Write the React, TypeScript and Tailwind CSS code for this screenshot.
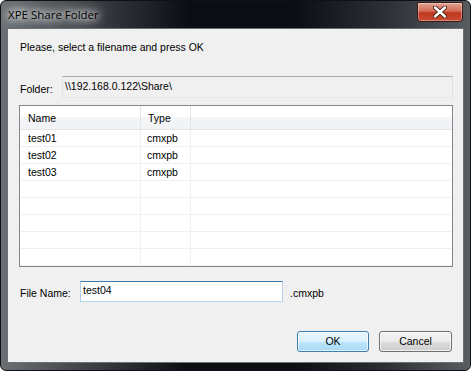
import React from "react";

const rows = [
  { name: "test01", type: "cmxpb" },
  { name: "test02", type: "cmxpb" },
  { name: "test03", type: "cmxpb" },
  { name: "", type: "" },
  { name: "", type: "" },
  { name: "", type: "" },
  { name: "", type: "" },
  { name: "", type: "" },
];

const CloseButton = () => (
  <div className="mt-[1px] mr-[7px] w-[46px] h-[20px] rounded-b-[4px] border border-[#3a1a14] bg-[linear-gradient(to_bottom,#e0a394_0%,#d46a55_45%,#c2371f_55%,#c84c33_100%)] flex items-center justify-center shadow-[inset_0_0_0_1px_rgba(255,255,255,0.35)]">
    <svg width="14" height="12" viewBox="0 0 14 12">
      <path d="M2 1.5 L12 10.5 M12 1.5 L2 10.5" stroke="#3b1a12" strokeWidth="4.2" strokeLinecap="round" />
      <path d="M2 1.5 L12 10.5 M12 1.5 L2 10.5" stroke="#ffffff" strokeWidth="2.4" strokeLinecap="round" />
    </svg>
  </div>
);

export default function App() {
  return (
    <div className="w-[471px] h-[371px] bg-white">
      <div className="w-[471px] h-[371px] rounded-[6px] border border-[#0e1116] bg-[linear-gradient(to_right,#6a6f74_0%,#3a3e43_20%,#0a0d11_40%,#0a0d11_62%,#2c3035_82%,#585d62_100%)] flex flex-col overflow-hidden">
        {/* title bar */}
        <div className="h-[27px] flex items-start justify-between">
          <div
            className="mt-[6px] ml-[7px] text-[11.5px] leading-[16px] text-black [text-shadow:0_0_6px_#fff,0_0_10px_#fff,0_0_16px_#fff,0_0_20px_rgba(255,255,255,0.8)]"
            style={{ fontFamily: '"Open Sans", "Noto Sans", sans-serif' }}
          >
            XPE Share Folder
          </div>
          <CloseButton />
        </div>

        {/* client area */}
        <div
          className="mx-[6px] mb-[7px] flex-1 border border-[#6d7175] bg-[#f0f0f0] flex flex-col pl-[11px] pr-[10px] text-[10.5px] text-black"
          style={{ fontFamily: '"Liberation Sans", Arial, sans-serif' }}
        >
          <div className="mt-[11px] ml-[1px] h-[14px] leading-[14px]">
            Please, select a filename and press OK
          </div>

          {/* folder row */}
          <div className="mt-[22px] flex items-start h-[22px]">
            <div className="ml-[1px] w-[42px] pt-[6px] leading-[14px]">Folder:</div>
            <div className="flex-1 h-[22px] border border-[#abadb3] border-l-[#e2e3ea] border-r-[#dbdfe6] border-b-[#e3e9ef] bg-[#f0f0f0] pl-[2px] leading-[18px]">
              {"\\\\192.168.0.122\\Share\\"}
            </div>
          </div>

          {/* list view */}
          <div className="mt-[7px] h-[162px] border border-[#828790] bg-white flex flex-col overflow-hidden">
            <div className="h-[24px] flex border-b border-[#e5e5e5] bg-[linear-gradient(to_bottom,#ffffff_0%,#ffffff_45%,#f4f5f7_50%,#f1f2f4_100%)]">
              <div className="w-[121px] border-r border-[#e3e5e8] pl-[8px] leading-[24px]">Name</div>
              <div className="w-[50px] border-r border-[#e3e5e8] pl-[7px] leading-[24px]">Type</div>
              <div className="flex-1" />
            </div>
            {rows.map((r, i) => (
              <div key={i} className="h-[17px] flex border-b border-[#f0f0f0]">
                <div className="w-[121px] border-r border-[#f0f0f0] pl-[8px] leading-[16px]">{r.name}</div>
                <div className="w-[50px] border-r border-[#f0f0f0] pl-[6px] leading-[16px]">{r.type}</div>
                <div className="flex-1" />
              </div>
            ))}
          </div>

          {/* file name row */}
          <div className="mt-[14px] flex items-start h-[22px]">
            <div className="ml-[1px] w-[60px] pt-[5px] leading-[14px]">File Name:</div>
            <div className="w-[203px] h-[21px] border border-[#3d7bad] border-l-[#b5cfe7] border-r-[#b5cfe7] border-b-[#b7d9ed] bg-white pl-[2px] leading-[17px]">
              test04
            </div>
            <div className="ml-[7px] pt-[5px] leading-[14px]">.cmxpb</div>
          </div>

          {/* buttons */}
          <div className="mt-[28px] flex justify-end gap-[10px] pr-[1px]">
            <button className="w-[72px] h-[21px] rounded-[3px] border border-[#3c7fb1] bg-[linear-gradient(to_bottom,#eaf6fd_0%,#d9f0fc_50%,#bee6fd_51%,#a7d9f5_100%)] shadow-[inset_0_0_0_1px_rgba(255,255,255,0.7)] text-[10.5px] leading-[19px] text-black">
              OK
            </button>
            <button className="w-[73px] h-[21px] rounded-[3px] border border-[#707070] bg-[linear-gradient(to_bottom,#f2f2f2_0%,#ebebeb_50%,#dddddd_51%,#cfcfcf_100%)] shadow-[inset_0_0_0_1px_rgba(255,255,255,0.7)] text-[10.5px] leading-[19px] text-black">
              Cancel
            </button>
          </div>
        </div>
      </div>
    </div>
  );
}
